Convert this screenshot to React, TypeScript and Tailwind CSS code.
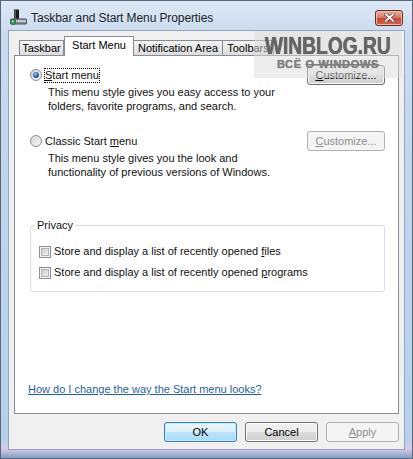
import React from 'react';

const sans = "font-['Liberation_Sans',Arial,sans-serif]";

function Radio({ checked }: { checked?: boolean }) {
  return (
    <svg width="12" height="12" viewBox="0 0 12 12" className="shrink-0">
      <defs>
        <linearGradient id={checked ? 'rb1' : 'rb2'} x1="0" y1="0" x2="1" y2="1">
          <stop offset="0" stopColor="#d4d4d4" />
          <stop offset="1" stopColor="#f7f7f7" />
        </linearGradient>
        <radialGradient id="dot" cx="0.4" cy="0.35" r="0.7">
          <stop offset="0" stopColor="#a8d4f5" />
          <stop offset="0.45" stopColor="#3d7fc0" />
          <stop offset="1" stopColor="#163f6a" />
        </radialGradient>
      </defs>
      <circle cx="6" cy="6" r="5.5" fill={`url(#${checked ? 'rb1' : 'rb2'})`} stroke="#8c8e90" />
      {checked && <circle cx="6" cy="6" r="3" fill="url(#dot)" />}
    </svg>
  );
}

function Check() {
  return (
    <svg width="12" height="12" viewBox="0 0 12 12" className="shrink-0">
      <defs>
        <linearGradient id="cb" x1="0" y1="0" x2="1" y2="1">
          <stop offset="0" stopColor="#c9c9c9" />
          <stop offset="1" stopColor="#f3f3f3" />
        </linearGradient>
      </defs>
      <rect x="0.5" y="0.5" width="11" height="11" fill="#f4f4f4" stroke="#8e8f8f" />
      <rect x="2.5" y="2.5" width="7" height="7" fill="url(#cb)" stroke="#b4b4b4" />
    </svg>
  );
}

function Btn({ children, kind = 'normal', w = 'w-[73px]' }: { children: React.ReactNode; kind?: 'normal' | 'default' | 'disabled'; w?: string }) {
  const look =
    kind === 'default'
      ? 'border-[#3c7fb1] bg-[linear-gradient(180deg,#eaf6fd_0%,#d9f0fc_50%,#bee6fd_50%,#a7d9f5_100%)] text-black shadow-[inset_0_0_0_1px_#c6e9fb]'
      : kind === 'disabled'
        ? 'border-[#adb2b5] bg-[#f4f4f4] text-[#8d8d8d]'
        : 'border-[#707070] bg-[linear-gradient(180deg,#f2f2f2_0%,#ebebeb_50%,#dddddd_50%,#cfcfcf_100%)] text-black shadow-[inset_0_0_0_1px_#fcfcfc]';
  return (
    <div className={`${w} h-[20px] rounded-[3px] border flex items-center justify-center text-[11px] leading-none ${look}`}>
      {children}
    </div>
  );
}

function Tab({ label, w, active }: { label: string; w: string; active?: boolean }) {
  if (active) {
    return (
      <div className={`${w} h-[20px] -mb-[1px] relative z-10 bg-white border border-b-0 border-[#898c95] flex justify-center pt-[2px] text-[11px] leading-[13px] text-black`}>
        {label}
      </div>
    );
  }
  return (
    <div className={`${w} h-[15px] bg-[linear-gradient(180deg,#f4f4f4_0%,#e8e8e8_50%,#dcdcdc_100%)] border border-b-0 border-[#898c95] -ml-[1px] first:ml-0 flex justify-center items-center text-[11px] leading-none text-black overflow-hidden whitespace-nowrap`}>
      {label}
    </div>
  );
}

export default function App() {
  return (
    <div className={`${sans} relative w-[413px] h-[459px] overflow-hidden border border-[#56687f] flex flex-col bg-[linear-gradient(180deg,#dde8f4_0%,#cbdcef_7%,#bfd5ec_40%,#b8d0ea_96%,#d8c8e4_98%,#7fa3c8_100%)]`}>
      {/* title bar */}
      <div className="h-[29px] shrink-0 flex items-center pl-[9px] pr-[9px] pt-[4px]">
        <svg width="17" height="17" viewBox="0 0 17 17" className="shrink-0">
          <rect x="4" y="0.5" width="5" height="10" fill="#1b1b1b" />
          <rect x="4.6" y="1" width="1.2" height="9" fill="#6a6a6a" />
          <rect x="0.5" y="10" width="16" height="5" rx="0.5" fill="#8a9097" stroke="#4d5258" />
          <rect x="6" y="11" width="10" height="2" fill="#c3c8cd" />
          <circle cx="3.2" cy="13" r="2.6" fill="#3ca53c" stroke="#1d5c91" strokeWidth="0.8" />
          <circle cx="2.6" cy="12.3" r="0.9" fill="#d6f2a0" />
        </svg>
        <div className="ml-[4px] text-[12px] tracking-[-0.1px] text-[#1a1f2b]">Taskbar and Start Menu Properties</div>
        <div className="ml-auto w-[28px] h-[16px] rounded-[3px] border border-[#6e2b22] bg-[linear-gradient(180deg,#eab5ab_0%,#d87a6a_45%,#c24a36_55%,#d3664f_100%)] flex items-center justify-center shadow-[inset_0_0_0_1px_#f0b8ac]">
          <svg width="11" height="9" viewBox="0 0 11 9">
            <path d="M1.5 1 L9.5 8 M9.5 1 L1.5 8" stroke="#6b2a20" strokeWidth="3" strokeLinecap="round" />
            <path d="M1.5 1 L9.5 8 M9.5 1 L1.5 8" stroke="#ffffff" strokeWidth="1.8" strokeLinecap="round" />
          </svg>
        </div>
      </div>

      {/* client area */}
      <div className="flex-1 mx-[7px] mb-[8px] border border-[#8fa5c0] bg-[#f0f0f0] flex flex-col">
        <div className="h-[24px] shrink-0 flex items-end pl-[10px]">
          <Tab label="Taskbar" w="w-[45px]" />
          <Tab label="Start Menu" w="w-[70px]" active />
          <Tab label="Notification Area" w="w-[90px]" />
          <Tab label="Toolbars" w="w-[52px]" />
        </div>

        <div className="flex-1 mx-[5px] border border-[#898c95] bg-white flex flex-col pt-[9px] pl-[15px] pr-[13px] pb-[17px] text-[11px] text-[#111]">
          <div className="h-[20px] flex items-center justify-between">
            <div className="flex items-center gap-[2px]">
              <Radio checked />
              <div className="border border-dotted border-black leading-[13px]">
                <span className="underline">S</span>tart menu
              </div>
            </div>
            <Btn w="w-[78px]">
              <span className="underline">C</span>ustomize...
            </Btn>
          </div>
          <div className="ml-[18px] leading-[14px]">
            <div>This menu style gives you easy access to your</div>
            <div>folders, favorite programs, and search.</div>
          </div>

          <div className="mt-[18px] h-[20px] flex items-center justify-between">
            <div className="flex items-center gap-[2px]">
              <Radio />
              <div className="border border-dotted border-transparent leading-[13px]">
                Classic Start <span className="underline">m</span>enu
              </div>
            </div>
            <Btn w="w-[78px]" kind="disabled">
              <span className="underline">C</span>ustomize...
            </Btn>
          </div>
          <div className="ml-[18px] leading-[14px]">
            <div>This menu style gives you the look and</div>
            <div>functionality of previous versions of Windows.</div>
          </div>

          <fieldset className="mt-[39px] border border-[#d5dfe5] rounded-[3px] px-[4px] pb-[8px]">
            <legend className="px-[2px] leading-[14px]">Privacy</legend>
            <div className="mt-[9px] pl-[4px] flex flex-col">
              <div className="h-[21px] flex items-center gap-[3px]">
                <Check />
                <span>
                  Store and display a list of recently opened <span className="underline">f</span>iles
                </span>
              </div>
              <div className="h-[21px] flex items-center gap-[3px]">
                <Check />
                <span>
                  Store and display a list of recently opened <span className="underline">p</span>rograms
                </span>
              </div>
            </div>
          </fieldset>

          <div className="mt-auto -ml-[2px] leading-[14px] text-[#1f5fa8] underline">How do I change the way the Start menu looks?</div>
        </div>

        <div className="h-[21px] mt-[8px] mb-[6px] shrink-0 flex justify-end gap-[8px] pr-[5px]">
          <Btn kind="default">OK</Btn>
          <Btn>Cancel</Btn>
          <Btn kind="disabled">
            <span className="underline">A</span>pply
          </Btn>
        </div>
      </div>

      {/* site watermark over the corner */}
      <div className="absolute left-[253px] top-[30px] w-[148px] h-[47px] bg-[#dcdcdc]/50 flex flex-col items-center pt-[3px]">
        <div className="text-[24px] leading-[24px] font-bold text-[#666] scale-x-[0.8] [text-shadow:0_0_1px_#666,0.5px_0_0_#666] whitespace-nowrap">WINBLOG.RU</div>
        <div className="text-[11px] leading-[12px] font-bold text-[#7e7e7e] tracking-[0.7px] [text-shadow:0_0_1px_#888] whitespace-nowrap">
          ВСЁ <span className="line-through">О WINDOWS</span>
        </div>
      </div>
    </div>
  );
}
